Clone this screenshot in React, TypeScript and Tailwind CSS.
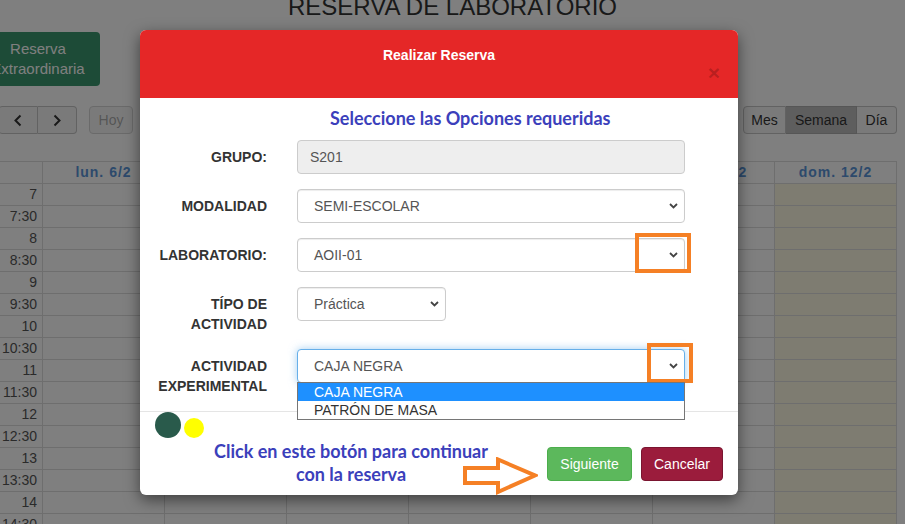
import { ReactNode } from 'react';

const times = ['7', '7:30', '8', '8:30', '9', '9:30', '10', '10:30', '11', '11:30', '12', '12:30', '13', '13:30', '14', '14:30'];
const days = ['lun. 6/2', 'mar. 7/2', 'mié. 8/2', 'jue. 9/2', 'vie. 10/2', 'sáb. 11/2', 'dom. 12/2'];

function Chevron({ dir }: { dir: 'left' | 'right' }) {
  return (
    <svg width="8" height="13" viewBox="0 0 8 13" fill="none">
      <path d={dir === 'left' ? 'M6.5 1.5 1.5 6.5l5 5' : 'M1.5 1.5l5 5-5 5'} stroke="#333" strokeWidth="2" />
    </svg>
  );
}

function SelectBox({ value, width = 'w-[388px]', focused = false, children }: { value: string; width?: string; focused?: boolean; children?: ReactNode }) {
  return (
    <div
      className={`relative ${width} h-[34px] rounded-[4px] border bg-white flex items-center pl-[16px] pr-[6px] text-[14px] text-[#555] ${
        focused ? 'border-[#66afe9] shadow-[0_0_8px_rgba(102,175,233,0.6)]' : 'border-[#ccc] shadow-[inset_0_1px_1px_rgba(0,0,0,0.075)]'
      }`}
    >
      <span className="flex-1">{value}</span>
      <svg width="9" height="6" viewBox="0 0 9 6" fill="none">
        <path d="M1 1l3.5 3.5L8 1" stroke="#444" strokeWidth="1.8" />
      </svg>
      {children}
    </div>
  );
}

function FormRow({ label, children }: { label: string; children: ReactNode }) {
  return (
    <div className="flex mb-[15px]">
      <div className="w-[127px] pt-[7px] text-right text-[14px] leading-[20px] font-bold text-[#333]">{label}</div>
      <div className="ml-[30px]">{children}</div>
    </div>
  );
}

export default function App() {
  return (
    <div className="relative w-[905px] h-[524px] overflow-hidden bg-white font-['Liberation_Sans',Arial,sans-serif]">
      {/* page behind the modal */}
      <div className="mt-[-2px] text-center text-[24px] leading-[18px] text-[#333]">RESERVA DE LABORATORIO</div>
      <div className="mt-[16px] ml-[-24px] w-[124px] h-[54px] rounded-[4px] bg-[#3a966e] text-white text-[15px] leading-[20px] flex flex-col items-center justify-center">
        <span>Reserva</span>
        <span>Extraordinaria</span>
      </div>

      <div className="mt-[20px] h-[28px] flex text-[14px] text-[#333]">
        <div className="ml-[-2px] flex">
          <div className="w-[40px] h-[28px] flex items-center justify-center bg-[#f5f5f5] border border-[#c4c4c4] rounded-l-[4px]">
            <Chevron dir="left" />
          </div>
          <div className="w-[39px] h-[28px] flex items-center justify-center bg-[#f5f5f5] border border-l-0 border-[#c4c4c4] rounded-r-[4px]">
            <Chevron dir="right" />
          </div>
        </div>
        <div className="ml-[12px] w-[44px] h-[28px] flex items-center justify-center bg-[#f5f5f5] border border-[#d4d4d4] rounded-[4px] text-[#333]/40">Hoy</div>
        <div className="ml-auto mr-[8px] flex">
          <div className="w-[43px] h-[28px] flex items-center justify-center bg-[#f5f5f5] border border-[#c4c4c4] rounded-l-[4px]">Mes</div>
          <div className="w-[71px] h-[28px] flex items-center justify-center bg-[#bdbdbd] border border-l-0 border-[#adadad]">Semana</div>
          <div className="w-[40px] h-[28px] flex items-center justify-center bg-[#f5f5f5] border border-l-0 border-[#c4c4c4] rounded-r-[4px]">Día</div>
        </div>
      </div>

      <div className="mt-[27px] w-[897px] border-t border-[#ddd]">
        <div className="flex h-[22px] border-b border-[#ddd]">
          <div className="w-[43px] border-r border-[#ddd]" />
          {days.map((d) => (
            <div key={d} className="w-[122px] border-r border-[#ddd] text-center text-[14px] leading-[21px] font-bold tracking-[1px] text-[#5a94d8]">
              {d}
            </div>
          ))}
        </div>
        {times.map((t) => (
          <div key={t} className="flex h-[22px] border-b border-[#ddd]">
            <div className="w-[43px] border-r border-[#ddd] pr-[5px] text-right text-[14px] leading-[21px] text-[#555]">{t}</div>
            {days.map((d, i) => (
              <div key={d} className={`w-[122px] border-r border-[#ddd] ${i === 6 ? 'bg-[#fcf8e3]' : ''}`} />
            ))}
          </div>
        ))}
      </div>

      {/* backdrop */}
      <div className="absolute inset-0 bg-black/50" />

      {/* modal */}
      <div className="absolute left-[140px] top-[30px] w-[598px] h-[465px] rounded-[6px] bg-white shadow-[0_5px_15px_rgba(0,0,0,0.5)]">
        <div className="h-[68px] rounded-t-[6px] bg-[#e52727] pt-[17px]">
          <div className="text-center text-[14px] leading-[16px] font-bold text-white">Realizar Reserva</div>
          <div className="mt-[2px] pr-[18px] text-right text-[21px] leading-[16px] font-bold text-black/20">×</div>
        </div>

        <div className="relative pt-[8px]">
          <div className="pl-[190px] font-['Lato',sans-serif] text-[18px] leading-[24px] font-bold text-[#3b40bb]">Seleccione las Opciones requeridas</div>
          <div className="mt-[10px]">
            <FormRow label="GRUPO:">
              <div className="w-[388px] h-[34px] rounded-[4px] border border-[#ccc] bg-[#eee] flex items-center pl-[12px] text-[14px] text-[#555]">S201</div>
            </FormRow>
            <FormRow label="MODALIDAD">
              <SelectBox value="SEMI-ESCOLAR" />
            </FormRow>
            <FormRow label="LABORATORIO:">
              <SelectBox value="AOII-01" />
            </FormRow>
            <FormRow label="TÍPO DE ACTIVIDAD">
              <SelectBox value="Práctica" width="w-[149px]" />
            </FormRow>
            <FormRow label="ACTIVIDAD EXPERIMENTAL">
              <SelectBox value="CAJA NEGRA" focused>
                <div className="absolute left-[-1px] top-[32px] z-10 w-[388px] border border-[#767676] bg-white text-[14px] leading-[18px]">
                  <div className="pl-[16px] bg-[#1e90ff] text-white">CAJA NEGRA</div>
                  <div className="pl-[16px] text-[#333]">PATRÓN DE MASA</div>
                </div>
              </SelectBox>
            </FormRow>
          </div>

          {/* annotation boxes */}
          <div className="absolute left-[495px] top-[135px] w-[56px] h-[40px] border-[4px] border-[#f58025]" />
          <div className="absolute left-[507px] top-[245px] w-[46px] h-[40px] border-[4px] border-[#f58025]" />
        </div>

        <div className="relative border-t border-[#e5e5e5] px-[15px]">
          <div className="flex items-end gap-[3px] h-[26px]">
            <div className="w-[26px] h-[26px] rounded-full bg-[#295a4b]" />
            <div className="w-[20px] h-[20px] rounded-full bg-[#ffff00]" />
          </div>
          <div className="flex items-start">
            <div className="w-[398px] mt-[2px] text-center font-['Lato',sans-serif] text-[18px] leading-[23px] font-bold text-[#3b40bb]">
              Click en este botón para continuar
              <br />
              con la reserva
            </div>
            <div className="ml-auto mt-[9px] flex gap-[9px] text-[14px] text-white">
              <div className="w-[85px] h-[34px] rounded-[4px] bg-[#5cb85c] border border-[#4cae4c] flex items-center justify-center">Siguiente</div>
              <div className="w-[82px] h-[34px] rounded-[4px] bg-[#9b1c3c] border border-[#7a1530] flex items-center justify-center">Cancelar</div>
            </div>
          </div>
          <svg className="absolute left-[323px] top-[45px]" width="75" height="38" viewBox="0 0 75 38" fill="none">
            <path d="M2 11H35V2.5L72 18.5L35 35V26H2Z" fill="white" stroke="#f58025" strokeWidth="4" />
          </svg>
        </div>
      </div>
    </div>
  );
}
